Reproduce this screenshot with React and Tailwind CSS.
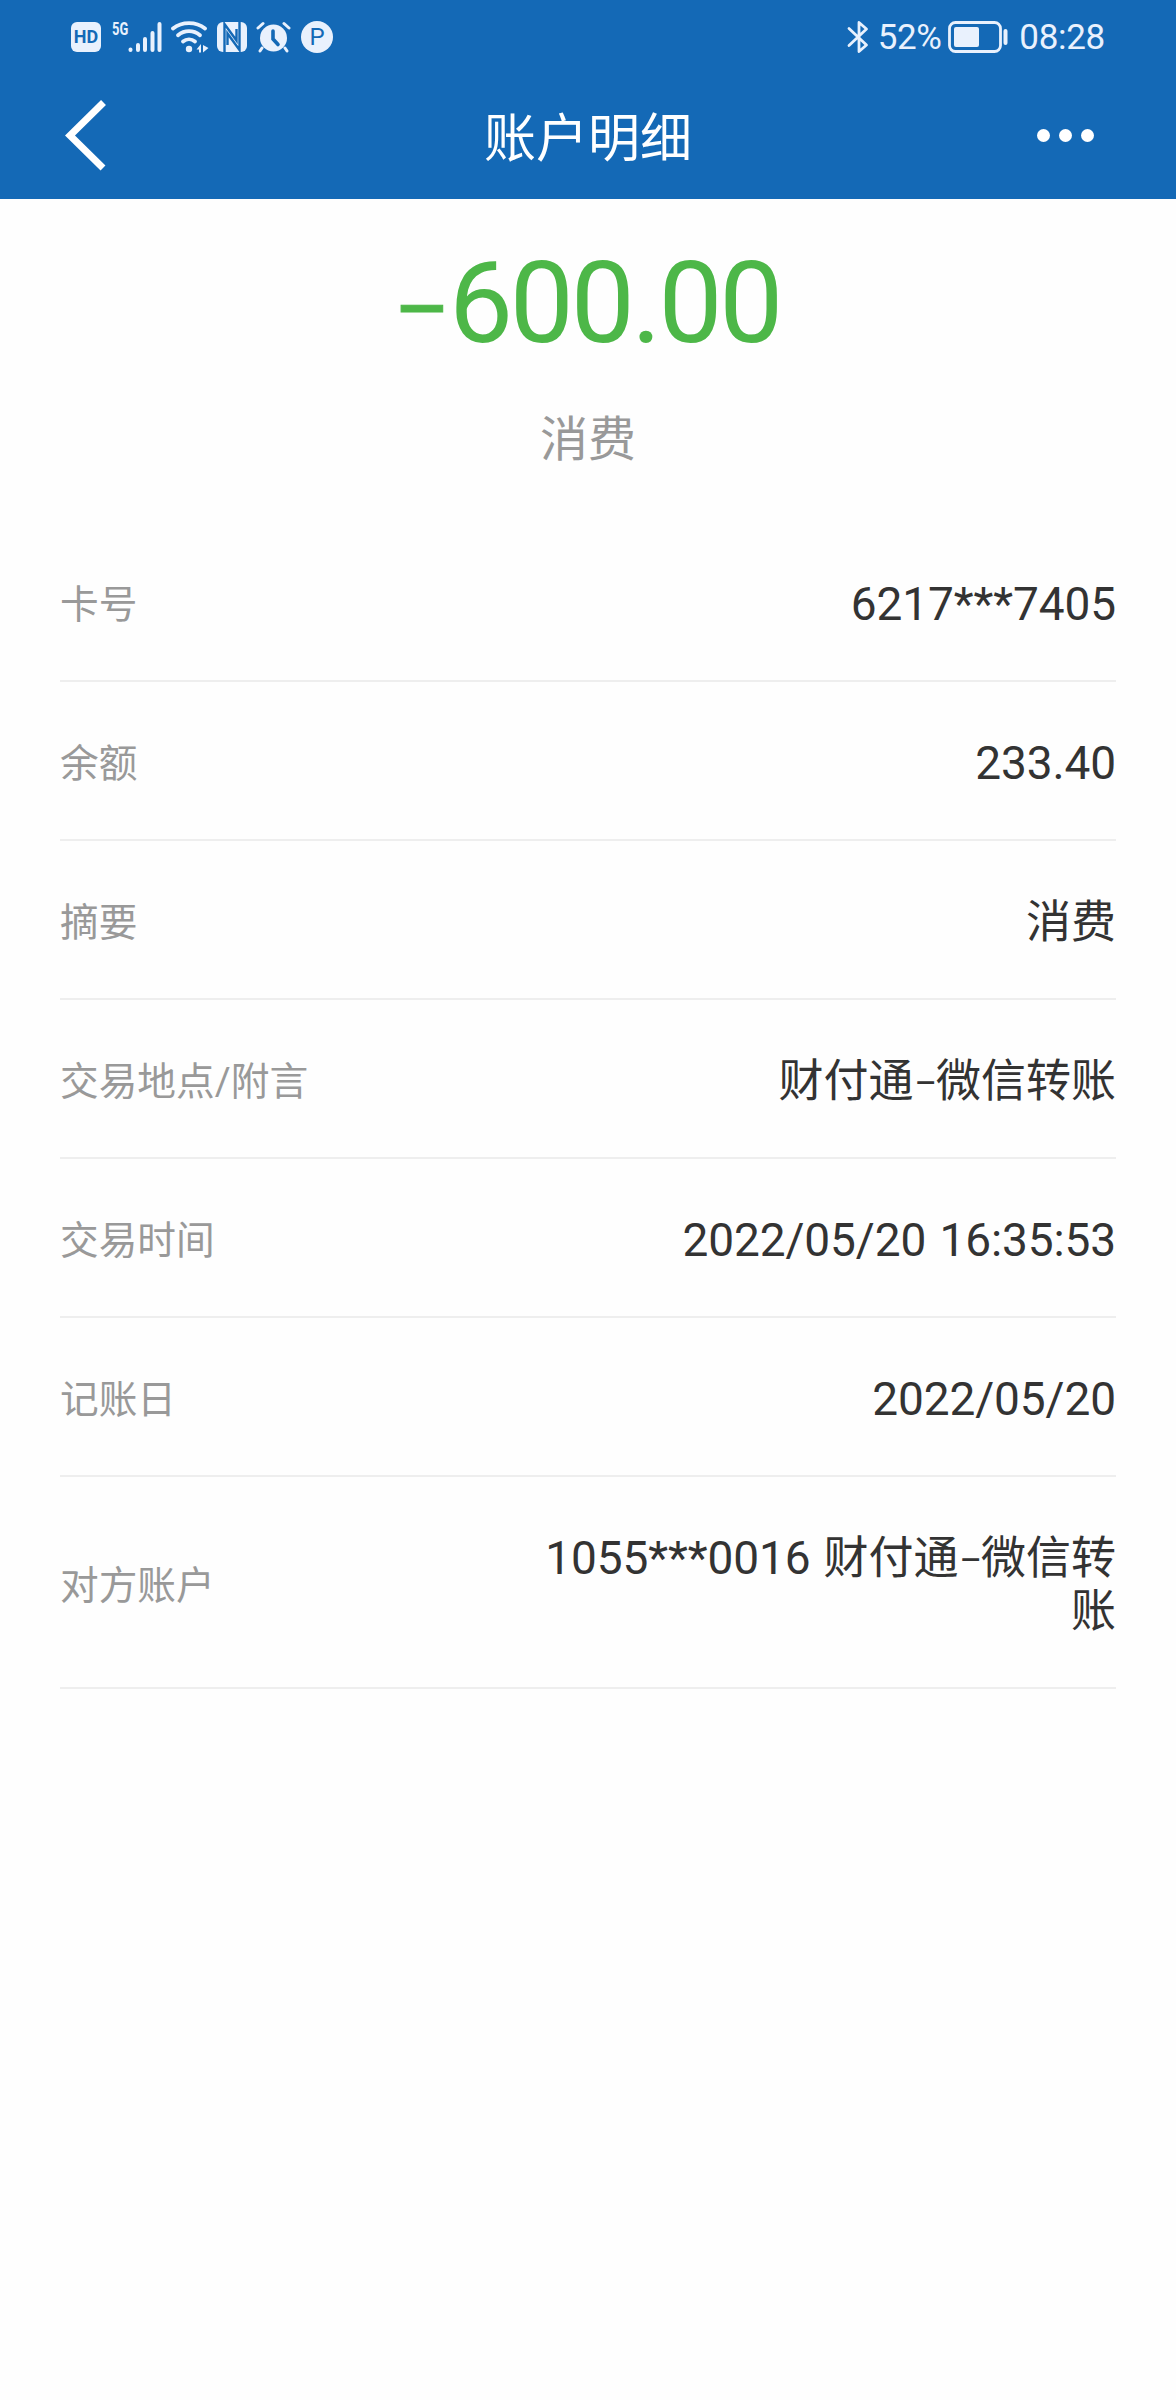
const details = [
  { label: "卡号", value: "6217***7405" },
  { label: "余额", value: "233.40" },
  { label: "摘要", value: "消费" },
  { label: "交易地点/附言", value: "财付通–微信转账" },
  { label: "交易时间", value: "2022/05/20 16:35:53" },
  { label: "记账日", value: "2022/05/20" },
  { label: "对方账户", value: "1055***0016 财付通–微信转账" },
]

function SignalIcon() {
  return (
    <svg className="h-8 w-[34px]" viewBox="0 0 34 32" fill="none" stroke="currentColor" strokeWidth="4" strokeLinecap="round">
      <path d="M2.5 28.5v.5M10 24v5M17 18v11M24.5 12v17M31.5 3v26" />
    </svg>
  )
}

function WifiIcon() {
  return (
    <svg className="ml-[9px] h-8 w-[38px]" viewBox="0 0 38 32" fill="none" stroke="currentColor" strokeWidth="3.8" strokeLinecap="round">
      <path d="M2 7.5C11 .2 25 .2 34 7.5" />
      <path d="M7 14.2C13.5 8.8 22.5 8.8 29 14.2" />
      <path d="M12 20.5C15.5 17.6 20.5 17.6 24 20.5" />
      <circle cx="18" cy="28" r="3.2" fill="currentColor" stroke="none" />
      <path d="M25.5 28.5 30 23v8.5h-2v-3zM32 24l5.5 3-5.5 4.5z" fill="currentColor" stroke="none" />
    </svg>
  )
}

// White tile with the N cut out of it
function NfcIcon() {
  return (
    <svg className="ml-2 h-[30px] w-[30px]" viewBox="0 0 30 30">
      <rect width="30" height="30" rx="6" fill="currentColor" />
      <path d="M7.5 30V2L19.5 18.5V7" fill="none" stroke="#1469b6" strokeWidth="2.4" />
      <path d="M22.5 0v28L10.5 11.5V23" fill="none" stroke="#1469b6" strokeWidth="2.4" />
    </svg>
  )
}

function AlarmIcon() {
  return (
    <svg className="ml-[9px] h-8 w-9" viewBox="0 0 36 32" fill="none" stroke="currentColor" strokeLinecap="round">
      <circle cx="17.5" cy="17" r="13.5" fill="currentColor" stroke="none" />
      <path d="M2 7 7 2.5M33 7 28 2.5M6 27l-2 3M29 27l2 3" strokeWidth="3" />
      <path d="M17 10v8l5 5.5" stroke="#1469b6" strokeWidth="3.6" />
    </svg>
  )
}

function BluetoothIcon() {
  return (
    <svg className="h-[34px] w-[22px]" viewBox="0 0 22 34" fill="none" stroke="currentColor" strokeWidth="2.8" strokeLinejoin="round" strokeLinecap="round">
      <path d="M2 8.5 19.5 25 12 31.5V2.5L19.5 9 2 25.5" />
    </svg>
  )
}

function BatteryIcon() {
  return (
    <svg className="ml-[7px] h-8 w-[60px]" viewBox="0 0 60 32">
      <rect x="1.5" y="1.5" width="51" height="29" rx="6" fill="none" stroke="currentColor" strokeWidth="2.8" />
      <rect x="6" y="6" width="25" height="20" rx="2" fill="currentColor" />
      <rect x="55.5" y="8" width="4" height="16" rx="2" fill="currentColor" />
    </svg>
  )
}

function StatusBar() {
  return (
    <div className="flex h-[73px] items-center justify-between px-[71px] text-[#e9f1fd]">
      <div className="flex items-center">
        <div className="flex h-[30px] w-[30px] items-center justify-center rounded-md bg-[#e9f1fd] text-[18px] font-bold leading-none text-[#1469b6]">
          HD
        </div>
        <span className="mb-4 ml-[11px] mr-px w-[15px] origin-left scale-x-[0.68] text-[19px] font-bold leading-none">5G</span>
        <SignalIcon />
        <WifiIcon />
        <NfcIcon />
        <AlarmIcon />
        <div className="ml-[9px] flex h-8 w-8 items-center justify-center rounded-full bg-[#e9f1fd] text-[24px] leading-none text-[#1469b6]">
          P
        </div>
      </div>
      <div className="flex items-center">
        <BluetoothIcon />
        <span className="ml-[9px] pt-[2px] text-[35px] leading-none tracking-[-0.5px]">52%</span>
        <BatteryIcon />
        <span className="ml-[11px] pt-[2px] text-[35px] leading-none tracking-[-0.3px]">08:28</span>
      </div>
    </div>
  )
}

function NavBar() {
  return (
    <div className="grid h-[126px] grid-cols-[1fr_auto_1fr] items-center pl-[63px] pr-[82px]">
      <button type="button" className="justify-self-start">
        <svg className="h-[74px] w-[44px]" viewBox="0 0 44 74" fill="none" stroke="currentColor" strokeWidth="7">
          <path d="M40.5 3.5 7 36.5 40 69" />
        </svg>
      </button>
      <h1 className="ml-[19px] pt-2 text-[52px] leading-none">账户明细</h1>
      <button type="button" className="flex items-center gap-[9px] justify-self-end pb-[2px]">
        <span className="h-[13px] w-[13px] rounded-full bg-white" />
        <span className="h-[13px] w-[13px] rounded-full bg-white" />
        <span className="h-[13px] w-[13px] rounded-full bg-white" />
      </button>
    </div>
  )
}

// Digits are set slightly larger than the Chinese text, the dash slightly tighter
function DetailValue({ text }) {
  return text.split(/([\d*/:.]+|–)/).map((part, idx) => {
    if (part === "–") {
      return <span key={idx} className="align-[2px] font-['Lato'] text-[42px] leading-none tracking-[-2px]">{part}</span>
    }
    if (/\d/.test(part)) {
      return <span key={idx} className="text-[46px] tracking-[-0.1px]">{part}</span>
    }
    return part
  })
}

function DetailRow({ label, value }) {
  return (
    <div className="flex items-center justify-between border-b-2 border-[#eeeeee] pb-[49px] pt-[55px]">
      <span className="text-[38.7px] leading-[53px] text-[#999999]">{label}</span>
      <span className="w-[590px] break-all text-right text-[45px] leading-[53px] text-[#333333] [word-spacing:2px]">
        <DetailValue text={value} />
      </span>
    </div>
  )
}

export default function App() {
  return (
    <div className="min-h-[2400px] w-[1176px] bg-[#fefefe] font-['Roboto','Noto_Sans_CJK_SC',sans-serif]">
      <header className="h-[199px] bg-[#1469b6] text-white">
        <StatusBar />
        <NavBar />
      </header>

      <section className="flex h-[324px] flex-col items-center pt-[49px]">
        <p className="mr-1 text-[114px] leading-[110px] tracking-[-3.2px] text-[#4db748]">
          <span className="align-[2px] font-['Lato'] text-[104px] leading-none [-webkit-text-stroke:1px_#4db748]">–</span>600.00
        </p>
        <p className="mt-[52px] text-[48px] leading-[60px] text-[#999999]">消费</p>
      </section>

      <section className="mx-[60px]">
        {details.map((item) => (
          <DetailRow key={item.label} label={item.label} value={item.value} />
        ))}
      </section>
    </div>
  )
}
